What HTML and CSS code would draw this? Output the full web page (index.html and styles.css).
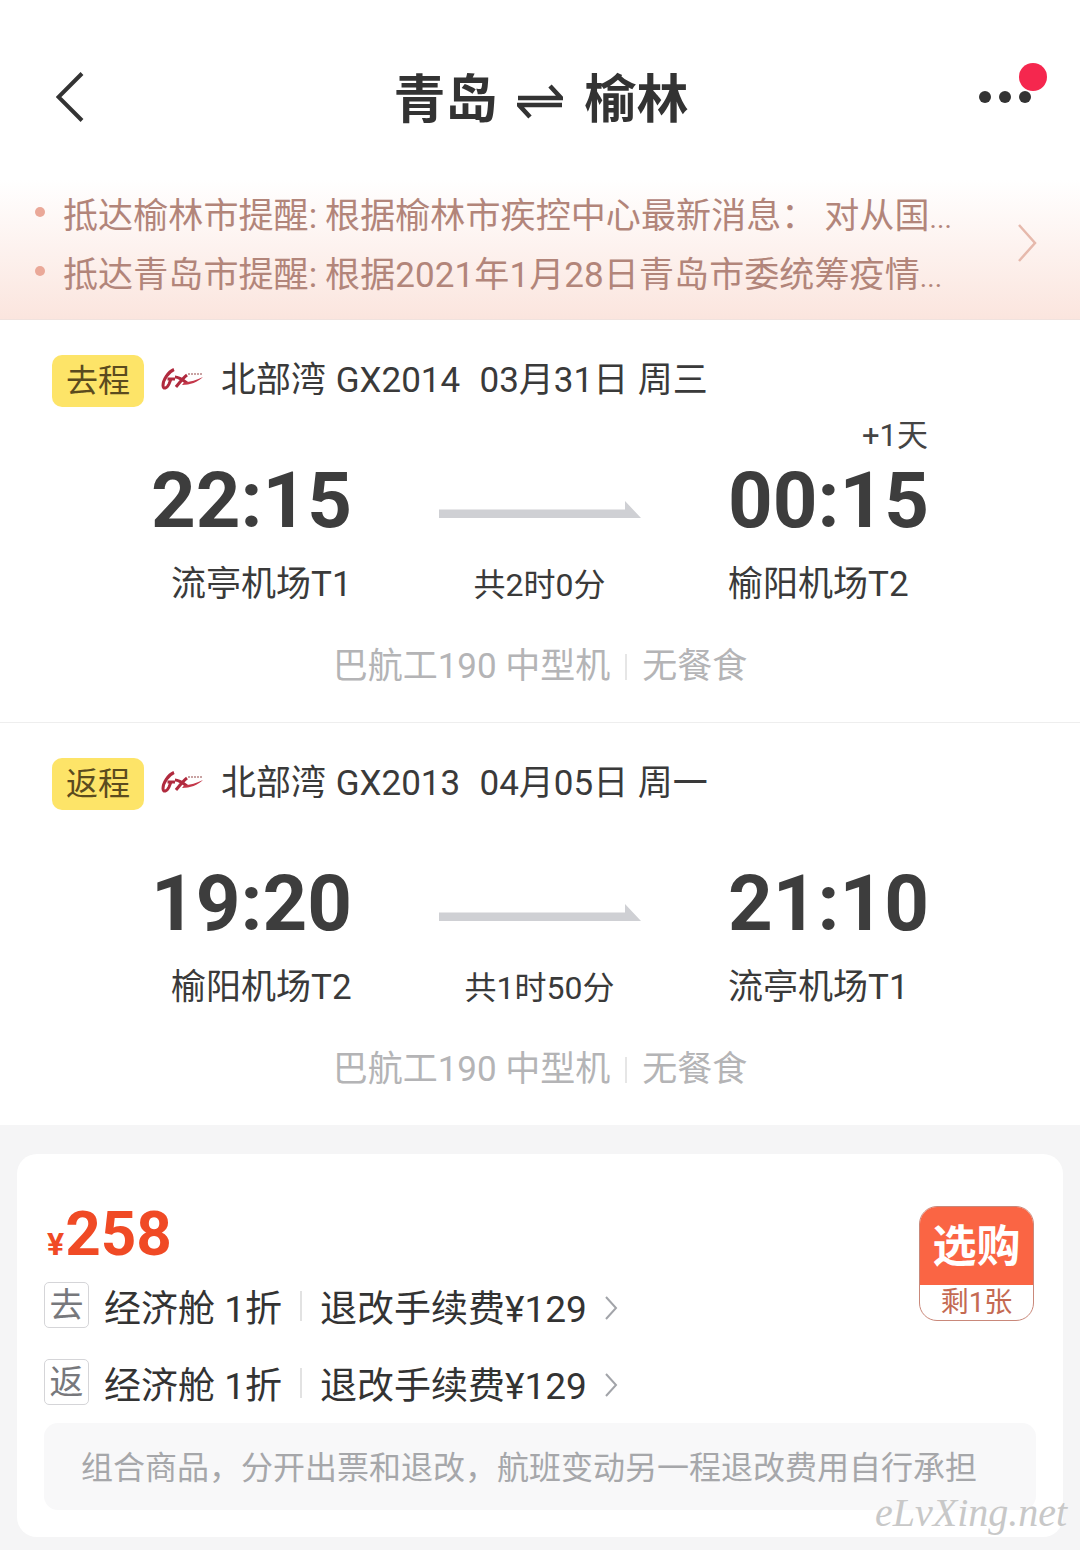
FILE: index.html
```html
<!DOCTYPE html>
<html lang="zh-CN">
<head>
<meta charset="utf-8">
<title>青岛 榆林</title>
<link rel="stylesheet" href="styles.css">
</head>
<body>
<div class="page">
  <header class="nav">
    <svg class="back" viewBox="0 0 28 50" width="28" height="50"><path d="M26 1.500 2.500 25 26 48.500" fill="none" stroke="#333" stroke-width="4"/></svg>
    <div class="title">
      <span>青岛</span>
      <svg class="swap" viewBox="0 0 46 36" width="46" height="36"><path d="M1 15H44L33 3M45 22H2L13 34" fill="none" stroke="#333" stroke-width="4.500"/></svg>
      <span>榆林</span>
    </div>
    <div class="more">
      <i class="dot"></i><i class="dot"></i><i class="dot"></i>
      <i class="badge"></i>
    </div>
  </header>

  <section class="notice">
    <div class="notice-list">
      <div class="notice-line"><i class="bullet"></i><span>抵达榆林市提醒: 根据榆林市疾控中心最新消息： 对从国<span class="ell">...</span></span></div>
      <div class="notice-line"><i class="bullet"></i><span>抵达青岛市提醒: 根据2021年1月28日青岛市委统筹疫情<span class="ell">...</span></span></div>
    </div>
    <svg class="notice-more" viewBox="0 0 20 38" width="20" height="38"><path d="M2 1 18 19 2 37" fill="none" stroke="#e6b9ac" stroke-width="2.500"/></svg>
  </section>

  <section class="leg leg-line">
    <div class="leg-head">
      <span class="tag">去程</span>
      <svg class="logo" viewBox="0 0 44 24" width="44" height="24"><path d="M14 2.500C8 5 3 13 3 18.500C3 22.500 7 21.500 9 17L11 12H7.500M11 12H15" fill="none" stroke="#b02a3e" stroke-width="3"/><path d="M15 10C19 10 23 13 27 16M27 8C23 11 20 15 16 20" fill="none" stroke="#b02a3e" stroke-width="3"/><path d="M22 18C30 18 38 15 43 10C37 13 30 15 24 15.500Z" fill="#c4374a"/><path d="M28 7H43" stroke="#c9a3a3" stroke-width="2" stroke-dasharray="2 1"/></svg>
      <span class="leg-text">北部湾 GX2014&nbsp;&nbsp;03月31日 周三</span>
    </div>
    <div class="times">
      <div class="end start-col">
        <div class="time">22:15</div>
        <div class="place">流亭机场T1</div>
      </div>
      <div class="mid">
        <svg class="arrow" viewBox="0 0 202 17" width="202" height="17"><path d="M0 8.500H186V0L202 17H0Z" fill="#cfd0d4"/></svg>
        <div class="duration">共2时0分</div>
      </div>
      <div class="end finish-col">
        <span class="plus">+1天</span>
        <div class="time">00:15</div>
        <div class="place">榆阳机场T2</div>
      </div>
    </div>
    <div class="plane"><span>巴航工190 中型机</span><i class="plane-sep"></i><span>无餐食</span></div>
  </section>

  <section class="leg">
    <div class="leg-head">
      <span class="tag">返程</span>
      <svg class="logo" viewBox="0 0 44 24" width="44" height="24"><path d="M14 2.500C8 5 3 13 3 18.500C3 22.500 7 21.500 9 17L11 12H7.500M11 12H15" fill="none" stroke="#b02a3e" stroke-width="3"/><path d="M15 10C19 10 23 13 27 16M27 8C23 11 20 15 16 20" fill="none" stroke="#b02a3e" stroke-width="3"/><path d="M22 18C30 18 38 15 43 10C37 13 30 15 24 15.500Z" fill="#c4374a"/><path d="M28 7H43" stroke="#c9a3a3" stroke-width="2" stroke-dasharray="2 1"/></svg>
      <span class="leg-text">北部湾 GX2013&nbsp;&nbsp;04月05日 周一</span>
    </div>
    <div class="times">
      <div class="end start-col">
        <div class="time">19:20</div>
        <div class="place">榆阳机场T2</div>
      </div>
      <div class="mid">
        <svg class="arrow" viewBox="0 0 202 17" width="202" height="17"><path d="M0 8.500H186V0L202 17H0Z" fill="#cfd0d4"/></svg>
        <div class="duration">共1时50分</div>
      </div>
      <div class="end finish-col">
        <div class="time">21:10</div>
        <div class="place">流亭机场T1</div>
      </div>
    </div>
    <div class="plane"><span>巴航工190 中型机</span><i class="plane-sep"></i><span>无餐食</span></div>
  </section>

  <section class="offer">
    <div class="card">
      <div class="card-top">
        <div class="fares">
          <div class="price"><span class="yen">¥</span><span class="amount">258</span></div>
          <div class="fare">
            <span class="fare-tag">去</span>
            <span class="fare-text">经济舱 1折</span><i class="fare-sep"></i>
            <span class="fare-text">退改手续费¥129</span>
            <svg class="fare-more" viewBox="0 0 14 26" width="14" height="26"><path d="M2 2 12 13 2 24" fill="none" stroke="#a2a4a9" stroke-width="2"/></svg>
          </div>
          <div class="fare">
            <span class="fare-tag">返</span>
            <span class="fare-text">经济舱 1折</span><i class="fare-sep"></i>
            <span class="fare-text">退改手续费¥129</span>
            <svg class="fare-more" viewBox="0 0 14 26" width="14" height="26"><path d="M2 2 12 13 2 24" fill="none" stroke="#a2a4a9" stroke-width="2"/></svg>
          </div>
        </div>
        <div class="buy">
          <div class="buy-main">选购</div>
          <div class="buy-left">剩1张</div>
        </div>
      </div>
      <div class="note">组合商品，分开出票和退改，航班变动另一程退改费用自行承担</div>
    </div>
  </section>
  <div class="watermark">eLvXing.net</div>
</div>
</body>
</html>
```

FILE: styles.css
```css
* { box-sizing: border-box; }
html, body { margin: 0; padding: 0; }
body {
  background: #fff;
  font-family: Roboto, "Noto Sans CJK SC", sans-serif;
  color: #333;
}
i { display: block; font-style: normal; }
svg { display: block; flex: none; }
.page { position: relative; width: 1080px; height: 1550px; overflow: hidden; background: #f5f5f6; }

.nav {
  height: 180px;
  background: #fff;
  position: relative;
  display: flex;
  align-items: flex-start;
  justify-content: center;
  padding: 73px 0 0 2px;
}
.back { position: absolute; left: 56px; top: 72px; }
.title {
  display: flex;
  align-items: center;
  gap: 19px;
  font-size: 52px;
  line-height: 56px;
  font-weight: 700;
  color: #333;
}
.swap { margin-right: 3px; }
.more { position: absolute; left: 979px; top: 91px; display: flex; gap: 8px; }
.dot { width: 12px; height: 12px; border-radius: 50%; background: #333; }
.badge {
  position: absolute;
  left: 40px;
  top: -28px;
  width: 28px;
  height: 28px;
  border-radius: 50%;
  background: #f5274e;
}

.notice {
  height: 140px;
  background: linear-gradient(#fff 0%, #fbe5de 100%);
  border-bottom: 1px solid #f0e2de;
  display: flex;
  justify-content: space-between;
  padding: 7px 43px 0 34px;
}
.notice-list { display: flex; flex-direction: column; gap: 8px; }
.notice-line {
  display: flex;
  align-items: center;
  gap: 19px;
  height: 51px;
  font-size: 35px;
  color: #b2857a;
  white-space: nowrap;
  word-spacing: -1px;
  letter-spacing: 0.1px;
}
.ell { font-size: 28px; }
.bullet { width: 10px; height: 10px; margin-bottom: 2px; border-radius: 50%; background: #eaa898; }
.notice-list .bullet { margin-left: 1px; margin-right: -1px; }
.notice-more { margin-top: 37px; }

.leg { height: 402px; background: #fff; padding: 35px 0 0 52px; }
.leg-line { height: 403px; border-bottom: 1px solid #eee; }
.leg-head { display: flex; align-items: center; height: 52px; }
.tag {
  width: 92px;
  height: 52px;
  border-radius: 10px;
  background: #fde468;
  color: #5b4b1e;
  font-size: 32px;
  line-height: 53px;
  text-align: center;
}
.logo { margin: 0 0 4px 16px; }
.leg-text {
  margin: -9px 0 0 17px;
  font-size: 35px;
  word-spacing: 1px;
  color: #3a3a3a;
  white-space: nowrap;
}

.times { display: flex; margin: 51px 0 0 99px; }
.end { position: relative; width: 200px; }
.time { font-size: 78px; line-height: 86px; font-weight: 700; color: #3d3d3d; text-align: right; white-space: nowrap; }
.start-col .place { padding-left: 20px; }
.place { margin-top: 19px; font-size: 35px; line-height: 44px; color: #3a3a3a; white-space: nowrap; }
.plus { position: absolute; right: 0; top: -40px; font-size: 31px; line-height: 36px; color: #444; }
.mid { width: 377px; display: flex; flex-direction: column; align-items: center; padding-top: 43px; }
.duration { margin-top: 45px; font-size: 32px; line-height: 44px; color: #3a3a3a; white-space: nowrap; }

.plane {
  margin: 38px 0 0 -52px;
  display: flex;
  justify-content: center;
  align-items: center;
  gap: 15px;
  font-size: 35px;
  line-height: 44px;
  color: #b4b4b6;
}
.plane-sep { width: 2px; height: 26px; background: #e6e6e6; }

.offer { padding: 29px 17px 0; }
.card {
  position: relative;
  height: 383px;
  background: #fff;
  border-radius: 20px;
  padding: 44px 27px 0;
}
.card-top { display: flex; justify-content: space-between; }
.price { display: flex; align-items: baseline; height: 68px; margin-top: 1px; padding-left: 3px; font-size: 62px; line-height: 70px; font-weight: 700; color: #f04a25; }
.yen { font-size: 32px; }
.amount { margin-left: 1px; }
.fare { display: flex; align-items: center; height: 46px; margin-bottom: 31px; }
.price + .fare { margin-top: 15px; }
.fare-tag {
  width: 45px;
  height: 46px;
  border: 1.5px solid #d5d5d8;
  border-radius: 5px;
  font-size: 34px;
  line-height: 45px;
  text-align: center;
  color: #77787c;
}
.fare-text { margin-top: 9px; font-size: 37px; line-height: 48px; color: #333; white-space: nowrap; }
.fare-tag + .fare-text { margin-left: 15px; }
.fare-sep { width: 2px; height: 30px; margin: 2px 18px 0; background: #e2e2e2; }
.fare-more { margin: 6px 0 0 17px; }
.buy {
  width: 115px;
  height: 115px;
  margin: 8px 2px 0 0;
  border: 1.5px solid #c9887a;
  border-radius: 18px;
  overflow: hidden;
  text-align: center;
}
.buy-main { height: 78px; background: #fa6544; color: #fff; font-size: 44px; line-height: 80px; font-weight: 700; }
.buy-left { font-size: 28px; line-height: 35px; color: #c46a52; }
.note {
  position: absolute;
  left: 27px;
  top: 269px;
  width: 992px;
  height: 87px;
  border-radius: 14px;
  background: #f8f8f9;
  padding-left: 37px;
  font-size: 32px;
  line-height: 90px;
  color: #a6a7aa;
  white-space: nowrap;
}
.watermark {
  position: absolute;
  left: 875px;
  top: 1489px;
  font-family: "Liberation Serif", serif;
  font-style: italic;
  font-size: 40px;
  color: #c8c8c8;
  white-space: nowrap;
}
```
